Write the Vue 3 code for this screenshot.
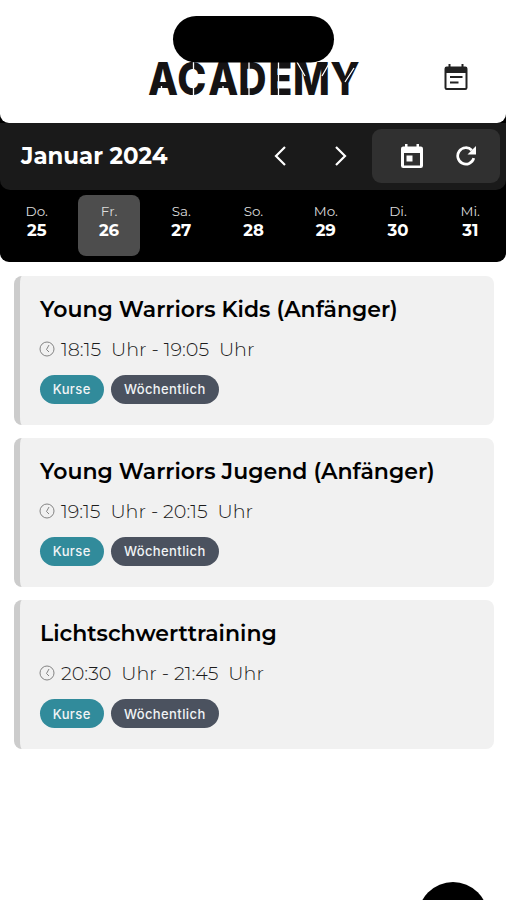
<script setup>
import { ref } from "vue";

const days = [
  { name: "Do.", date: 25 },
  { name: "Fr.", date: 26 },
  { name: "Sa.", date: 27 },
  { name: "So.", date: 28 },
  { name: "Mo.", date: 29 },
  { name: "Di.", date: 30 },
  { name: "Mi.", date: 31 },
];
const selected = ref(26);

const courses = [
  { title: "Young Warriors Kids (Anfänger)", from: "18:15", to: "19:05" },
  { title: "Young Warriors Jugend (Anfänger)", from: "19:15", to: "20:15" },
  { title: "Lichtschwerttraining", from: "20:30", to: "21:45" },
];
</script>

<template>
  <div class="screen">
    <div class="top">
      <header class="header">
        <svg class="logo" viewBox="0 0 214 100" width="214" height="100">
          <text class="logo-text" transform="scale(0.86 1)" x="0 34 70 105 140 168.500 212" y="79.5">ACADEMY</text>
          <!-- stencil cuts -->
          <path
            class="logo-cut"
            d="M13.500 70v10M45.500 45V82M75 70v10M101 45V82M130.500 45V82M149 46l8 14M182 46l-8 14M197 66l9-14"
          />
          <rect x="25" y="0" width="161" height="46.5" rx="23.2" />
        </svg>
        <svg class="notes" viewBox="0 0 24 26" width="24" height="26">
          <path d="M4.500 0h2v2.500h11V0h2v2.500h1.800A2.200 2.200 0 0 1 23.500 4.700V23.800A2.200 2.200 0 0 1 21.300 26H2.700A2.200 2.200 0 0 1 .5 23.800V4.700A2.200 2.200 0 0 1 2.700 2.500H4.500ZM2.500 9v15h19V9Z" fill-rule="evenodd" />
          <path d="M6 12h12.500v2H6zM6 17.500h8.500v2H6z" />
        </svg>
      </header>

      <div class="toolbar">
        <h1 class="month">Januar 2024</h1>
        <button class="arrow">
          <svg viewBox="0 0 12 20" width="12" height="20"><path d="M11 1 2 10l9 9" /></svg>
        </button>
        <button class="arrow next">
          <svg viewBox="0 0 12 20" width="12" height="20"><path d="m1 1 9 9-9 9" /></svg>
        </button>
        <div class="actions">
          <svg viewBox="0 0 22 24" width="22" height="24">
            <path d="M4 0h2.500v2.500h9V0H18v2.500h1.800A2.200 2.200 0 0 1 22 4.700v17.100a2.200 2.200 0 0 1-2.200 2.200H2.200A2.200 2.200 0 0 1 0 21.800V4.700a2.200 2.200 0 0 1 2.200-2.200H4ZM3 9v12.500h16V9ZM5.500 11.500h6v6h-6Z" fill-rule="evenodd" />
          </svg>
          <svg viewBox="0 0 20 20" width="20" height="20">
            <path d="M17.800 12.200A8.200 8.200 0 1 1 15.800 4.200" fill="none" stroke="#fff" stroke-width="2.700" />
            <path d="M20 0v8.500h-8.500z" />
          </svg>
        </div>
      </div>

      <nav class="week">
        <div
          v-for="day in days"
          :key="day.date"
          class="day"
          :class="{ active: day.date === selected }"
          @click="selected = day.date"
        >
          <span class="day-name">{{ day.name }}</span>
          <span class="day-date">{{ day.date }}</span>
        </div>
      </nav>
    </div>

    <main class="list">
      <article v-for="course in courses" :key="course.title" class="card">
        <h2 class="title">{{ course.title }}</h2>
        <div class="time">
          <svg class="clock" viewBox="0 0 16 16" width="16" height="16">
            <circle cx="8" cy="8" r="7" />
            <path d="M10 4 7.500 8.500l2.500 2.500" />
          </svg>
          <span>{{ course.from }}&nbsp; Uhr - {{ course.to }}&nbsp; Uhr</span>
        </div>
        <div class="tags">
          <span class="tag kurse">Kurse</span>
          <span class="tag weekly">Wöchentlich</span>
        </div>
      </article>
    </main>

    <button class="fab" aria-label="Menü"></button>
  </div>
</template>

<style>
body {
  background: #fff;
}
</style>

<style scoped>
.screen {
  position: relative;
  height: 900px;
  overflow: hidden;
  background: #fff;
  font-family: Montserrat, Inter, sans-serif;
  color: #0c0c0c;
}

.top {
  background: #000;
  border-radius: 0 0 9px 9px;
  overflow: hidden;
}

.header {
  display: flex;
  align-items: flex-start;
  height: 122.5px;
  padding: 15.500px 0 0 148px;
  box-sizing: border-box;
  background: #fff;
  border-radius: 0 0 9px 9px;
}

.logo-text {
  font-family: Inter, sans-serif;
  font-size: 45.5px;
  font-weight: 800;
  fill: #151314;
}

.logo-cut {
  fill: none;
  stroke: #fff;
  stroke-width: 1.3;
}

.notes {
  margin: 48.500px 0 0 82px;
  fill: #222;
}

.toolbar {
  display: flex;
  align-items: center;
  height: 66.5px;
  margin-top: 0.5px;
  padding: 0 6px 0 21px;
  background: #1a1a1a;
  border-radius: 0 0 10px 10px;
}

.month {
  width: 253px;
  margin: 0;
  font-size: 22.9px;
  font-weight: 700;
  color: #fff;
  white-space: nowrap;
}

.arrow {
  display: flex;
  padding: 0;
  border: 0;
  background: none;
}

.arrow.next {
  margin-left: 49px;
}

.arrow path {
  fill: none;
  stroke: #fff;
  stroke-width: 2.2;
}

.actions {
  display: flex;
  align-items: center;
  gap: 33px;
  height: 54px;
  margin-left: auto;
  padding: 0 24px 0 29px;
  background: #303030;
  border-radius: 9px;
}

.actions svg {
  fill: #fff;
}

.week {
  display: flex;
  justify-content: space-between;
  padding: 5px 5px 6px 6px;
}

.day {
  display: flex;
  flex-direction: column;
  align-items: center;
  width: 61.500px;
  height: 61.500px;
  padding-top: 8px;
  box-sizing: border-box;
  border-radius: 8px;
  color: #fff;
}

.day.active {
  background: #4d4d4d;
}

.day-name {
  font-size: 13.5px;
  line-height: 17px;
  font-weight: 400;
  color: #dcdcdc;
}

.day-date {
  font-size: 16.5px;
  line-height: 20px;
  font-weight: 700;
}

.list {
  display: flex;
  flex-direction: column;
  gap: 13.600px;
  padding: 14px 12px 0 14px;
}

.card {
  height: 148.600px;
  padding: 21px 0 0 20px;
  box-sizing: border-box;
  background: #f1f1f1;
  border-left: 6px solid #ccc;
  border-radius: 8px;
}

.title {
  margin: 0;
  font-size: 22px;
  line-height: 25px;
  font-weight: 600;
  white-space: nowrap;
  color: #000;
}

.time {
  display: flex;
  align-items: center;
  gap: 6px;
  margin-top: 14px;
  height: 26px;
  font-size: 19.15px;
  font-weight: 300;
  white-space: nowrap;
  color: #1c1c1c;
}

.clock {
  margin-left: -1px;
  fill: none;
  stroke: #777;
  stroke-width: 0.9;
}

.tags {
  display: flex;
  gap: 7px;
  margin-top: 12.500px;
  margin-left: -0.5px;
}

.tag {
  display: flex;
  align-items: center;
  justify-content: center;
  height: 29.500px;
  border-radius: 15px;
  font-family: Inter, sans-serif;
  font-size: 13px;
  font-weight: 450;
  letter-spacing: 0.4px;
  color: #f1f4f6;
}

.kurse {
  width: 64.500px;
  background: #318b9b;
}

.weekly {
  width: 107.5px;
  background: #4b525f;
}

.fab {
  position: absolute;
  top: 882px;
  left: 418px;
  width: 70px;
  height: 70px;
  padding: 0;
  border: 0;
  border-radius: 50%;
  background: #000;
}
</style>
